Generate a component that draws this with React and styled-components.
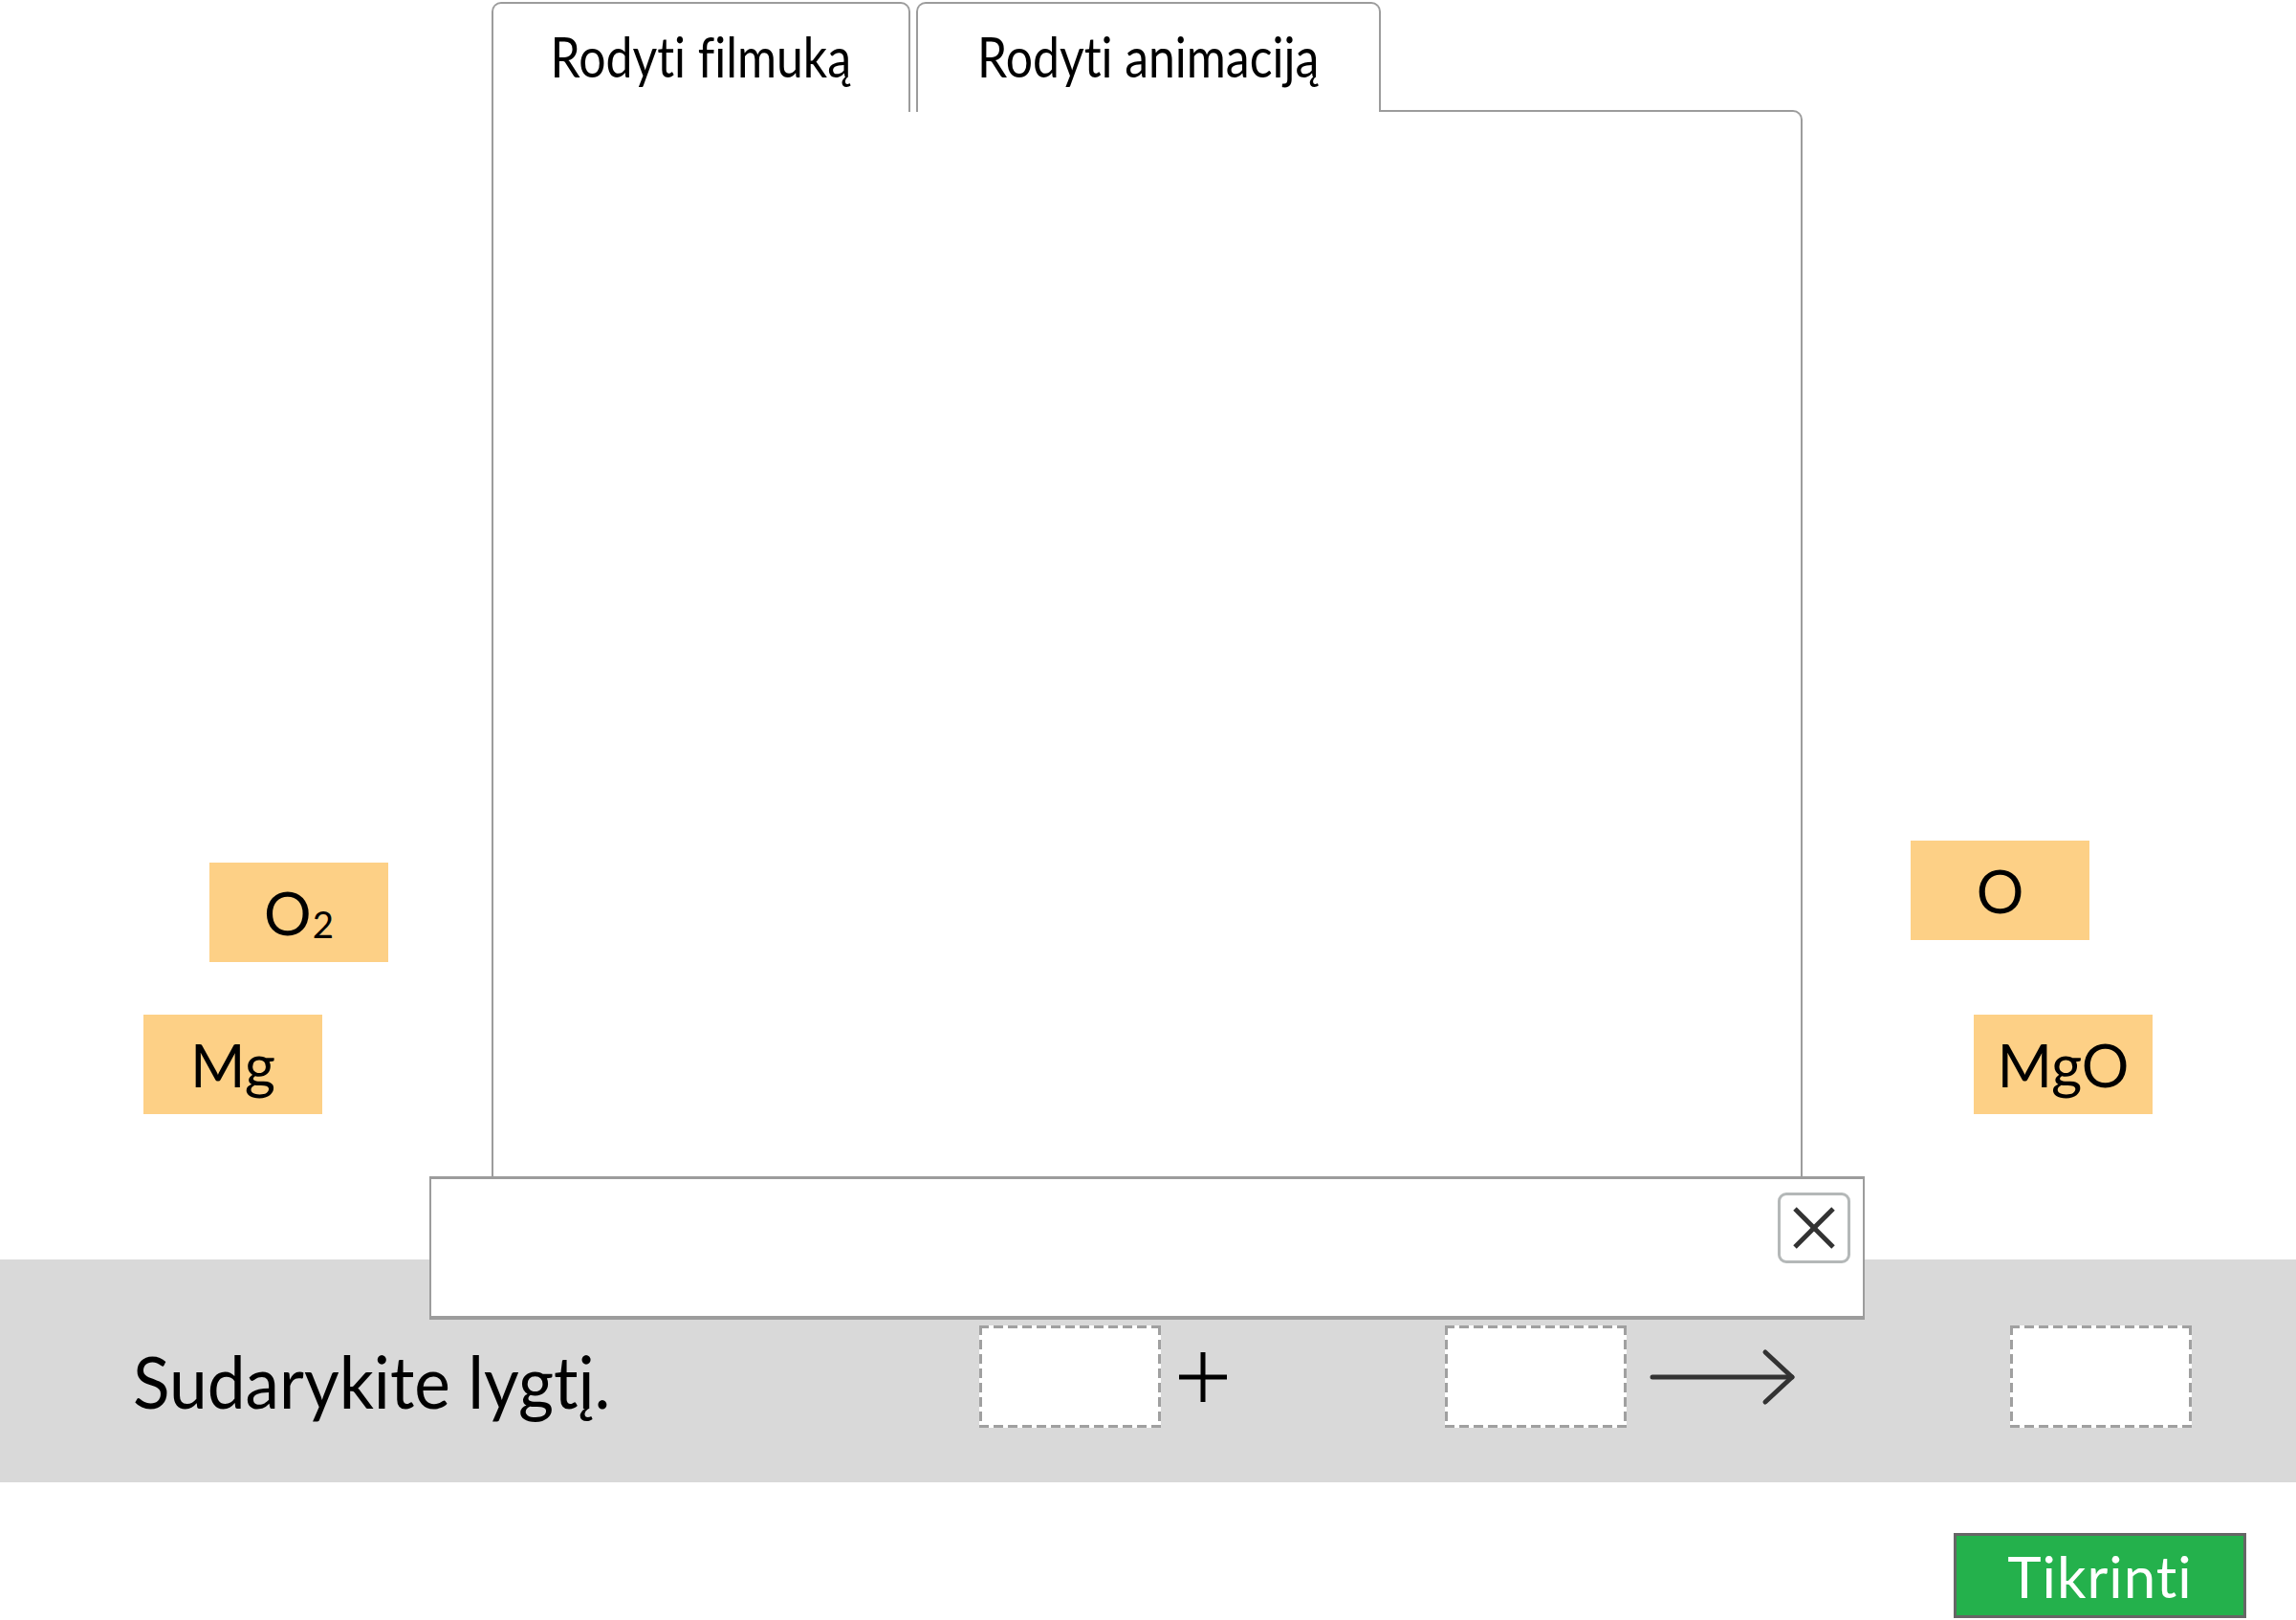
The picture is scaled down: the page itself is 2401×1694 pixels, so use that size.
import React from 'react'
import styled, { createGlobalStyle } from 'styled-components'

const GlobalStyle = createGlobalStyle`
    html, body {
        margin: 0;
        padding: 0;
        background: #ffffff;
        overflow: hidden;
    }
    body {
        font-family: Lato, "Open Sans", sans-serif;
        color: #000;
    }
    * {
        font-variant-ligatures: none;
        font-feature-settings: "liga" 0, "clig" 0, "dlig" 0;
    }
`

const tiles = [
    { id: 'o2', label: 'O', sub: '2', left: 219, top: 902 },
    { id: 'mg', label: 'Mg', left: 150, top: 1061 },
    { id: 'o', label: 'O', left: 1998, top: 879 },
    { id: 'mgo', label: 'MgO', left: 2064, top: 1061 },
]

function PlusIcon() {
    return (
        <svg width="50" height="52" viewBox="0 0 50 52">
            <line x1="25" y1="0" x2="25" y2="52" stroke="#000" strokeWidth="5" />
            <line x1="0" y1="26" x2="50" y2="26" stroke="#000" strokeWidth="5" />
        </svg>
    )
}

function ArrowIcon() {
    return (
        <svg width="154" height="60" viewBox="0 0 154 60">
            <line x1="3" y1="30" x2="149" y2="30" stroke="#333" strokeWidth="5" strokeLinecap="round" />
            <polyline points="121,4 149,30 121,56" fill="none" stroke="#333" strokeWidth="5" strokeLinecap="round" strokeLinejoin="round" />
        </svg>
    )
}

function CloseIcon() {
    return (
        <svg width="46" height="46" viewBox="0 0 46 46">
            <line x1="3" y1="3" x2="43" y2="43" stroke="#333" strokeWidth="5" />
            <line x1="43" y1="3" x2="3" y2="43" stroke="#333" strokeWidth="5" />
        </svg>
    )
}

function App() {
    return (
        <Page>
            <GlobalStyle />
            <TopArea>
                <TabPanel>
                    <TabRow>
                        <Tab $width={438}><TabLabel>Rodyti filmuką</TabLabel></Tab>
                        <Tab $width={486}><TabLabel>Rodyti animaciją</TabLabel></Tab>
                    </TabRow>
                    <PanelBody />
                </TabPanel>
            </TopArea>

            <EquationBar>
                <PromptCell>
                    <Prompt>Sudarykite lygtį.</Prompt>
                </PromptCell>
                <Slot />
                <Operator $width={297} $offset={19}><PlusIcon /></Operator>
                <Slot />
                <Operator $width={401} $offset={24}><ArrowIcon /></Operator>
                <Slot />
            </EquationBar>

            <Footer>
                <CheckButton>Tikrinti</CheckButton>
            </Footer>

            {tiles.map(t => (
                <Tile key={t.id} style={{ left: t.left, top: t.top }}>
                    {t.label}
                    {t.sub && <Sub>{t.sub}</Sub>}
                </Tile>
            ))}

            <Dialog>
                <CloseButton aria-label="close"><CloseIcon /></CloseButton>
            </Dialog>
        </Page>
    )
}

const Page = styled.div`
    position: relative;
    width: 2401px;
    height: 1694px;
    display: flex;
    flex-direction: column;
    overflow: hidden;
`

const TopArea = styled.div`
    height: 1317px;
    padding: 2px 0 0 514px;
    box-sizing: border-box;
`

const TabPanel = styled.div`
    width: 1371px;
    display: flex;
    flex-direction: column;
`

const TabRow = styled.div`
    display: flex;
    gap: 6px;
    align-self: flex-start;
    background: #fff;
    margin-bottom: -2px;
    position: relative;
    z-index: 1;
`

const Tab = styled.div`
    width: ${p => p.$width}px;
    height: 115px;
    box-sizing: border-box;
    border: 2px solid #9c9c9c;
    border-bottom: none;
    border-radius: 10px 10px 0 0;
    background: #fff;
    display: flex;
    justify-content: center;
    padding-top: 20px;
`

const TabLabel = styled.span`
    display: inline-block;
    font-family: Lato, "Open Sans", sans-serif;
    font-size: 58px;
    line-height: 1.2;
    color: #000;
    transform: scaleX(0.86);
    white-space: nowrap;
`

const PanelBody = styled.div`
    height: 1125px;
    border: 2px solid #9c9c9c;
    border-bottom: none;
    border-radius: 0 10px 0 0;
    background: #fff;
`

const EquationBar = styled.div`
    height: 233px;
    background: #d9d9d9;
    display: flex;
    align-items: center;
    padding: 12px 0 0 139px;
    box-sizing: border-box;
`

const PromptCell = styled.div`
    width: 885px;
    flex-shrink: 0;
    padding-top: 8px;
`

const Prompt = styled.span`
    display: inline-block;
    font-family: Lato, "Open Sans", sans-serif;
    font-size: 75px;
    color: #000;
    white-space: nowrap;
    transform: scaleX(0.95);
    transform-origin: left center;
`

const dash = '#a0a0a0'

const Slot = styled.div`
    width: 190px;
    height: 107px;
    box-sizing: border-box;
    flex-shrink: 0;
    background:
        linear-gradient(to right, ${dash} 66%, transparent 0) top left / 15px 3px repeat-x,
        linear-gradient(to right, ${dash} 66%, transparent 0) bottom left / 15px 3px repeat-x,
        linear-gradient(to bottom, ${dash} 66%, transparent 0) top left / 3px 15px repeat-y,
        linear-gradient(to bottom, ${dash} 66%, transparent 0) top right / 3px 15px repeat-y,
        #fff;
`

const Operator = styled.div`
    width: ${p => p.$width}px;
    padding-left: ${p => p.$offset}px;
    box-sizing: border-box;
    display: flex;
    align-items: center;
    flex-shrink: 0;
    svg { display: block; }
`

const Footer = styled.div`
    flex: 1;
    display: flex;
    justify-content: flex-end;
    align-items: flex-end;
    padding: 0 52px 2px 0;
`

const CheckButton = styled.button`
    width: 306px;
    height: 89px;
    box-sizing: border-box;
    background: #24b14c;
    border: 3px solid #666666;
    color: #fff;
    font-family: Lato, "Open Sans", sans-serif;
    font-size: 60px;
    letter-spacing: 1px;
    padding: 0;
    cursor: pointer;
`

const Tile = styled.div`
    position: absolute;
    width: 187px;
    height: 104px;
    background: #fdd086;
    display: flex;
    align-items: center;
    justify-content: center;
    font-family: Lato, "Open Sans", sans-serif;
    font-size: 62px;
    color: #000;
    z-index: 2;
`

const Sub = styled.span`
    font-size: 0.62em;
    position: relative;
    top: 0.3em;
    margin-left: 1px;
`

const Dialog = styled.div`
    position: absolute;
    left: 449px;
    top: 1230px;
    width: 1501px;
    height: 150px;
    box-sizing: border-box;
    background: #fff;
    border: 2px solid #9c9c9c;
    border-top-width: 3px;
    border-bottom-width: 4px;
    z-index: 3;
    display: flex;
    justify-content: flex-end;
    align-items: flex-start;
    padding: 14px 13px 0 0;
`

const CloseButton = styled.button`
    width: 76px;
    height: 74px;
    box-sizing: border-box;
    background: #fff;
    border: 3px solid #b4b8b8;
    border-radius: 9px;
    display: flex;
    align-items: center;
    justify-content: center;
    padding: 0;
    cursor: pointer;
    svg { display: block; }
`

export default App
